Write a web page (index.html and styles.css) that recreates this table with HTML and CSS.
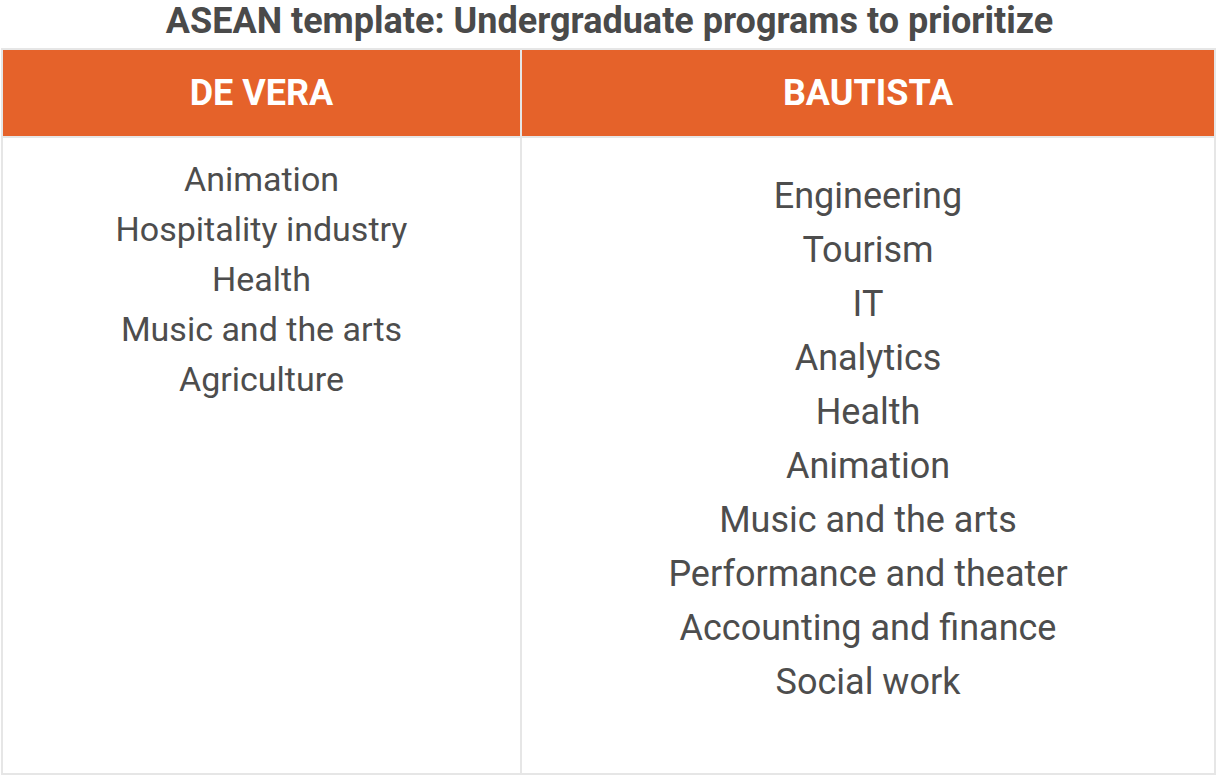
FILE: index.html
```html
<!DOCTYPE html>
<html>
<head>
<meta charset="utf-8">
<link rel="stylesheet" href="styles.css">
</head>
<body>
<div class="page">
  <h1 class="title">ASEAN template: Undergraduate programs to prioritize</h1>
  <div class="table">
    <div class="head head-left">DE VERA</div>
    <div class="head head-right">BAUTISTA</div>
    <div class="cell cell-left">
      <div>Animation</div>
      <div>Hospitality industry</div>
      <div>Health</div>
      <div>Music and the arts</div>
      <div>Agriculture</div>
    </div>
    <div class="cell cell-right">
      <div>Engineering</div>
      <div>Tourism</div>
      <div>IT</div>
      <div>Analytics</div>
      <div>Health</div>
      <div>Animation</div>
      <div>Music and the arts</div>
      <div>Performance and theater</div>
      <div>Accounting and finance</div>
      <div>Social work</div>
    </div>
  </div>
</div>
</body>
</html>
```

FILE: styles.css
```css
html, body {
  margin: 0;
  padding: 0;
  background: #ffffff;
}
.page {
  width: 1219px;
  height: 776px;
  font-family: Roboto, "Liberation Sans", sans-serif;
  display: flex;
  flex-direction: column;
}
.title {
  margin: 0;
  height: 48px;
  line-height: 42px;
  font-size: 36px;
  font-weight: 700;
  color: #4a4a4a;
  text-align: center;
}
.table {
  box-sizing: border-box;
  margin-left: 1px;
  width: 1215px;
  height: 727px;
  border: 2px solid #e6e6e6;
  display: grid;
  grid-template-columns: 517px 1fr;
  grid-template-rows: 86px 1fr;
  background: #e6e6e6;
  column-gap: 2px;
  row-gap: 2px;
}
.head {
  background: #e5622a;
  color: #ffffff;
  font-weight: 700;
  font-size: 36px;
  display: flex;
  align-items: center;
  justify-content: center;
}
.cell {
  background: #ffffff;
  color: #4d4d4d;
  text-align: center;
}
.cell-left {
  padding-top: 16px;
  font-size: 34px;
  line-height: 50px;
}
.cell-right {
  padding-top: 31px;
  font-size: 36px;
  line-height: 54px;
}
```
